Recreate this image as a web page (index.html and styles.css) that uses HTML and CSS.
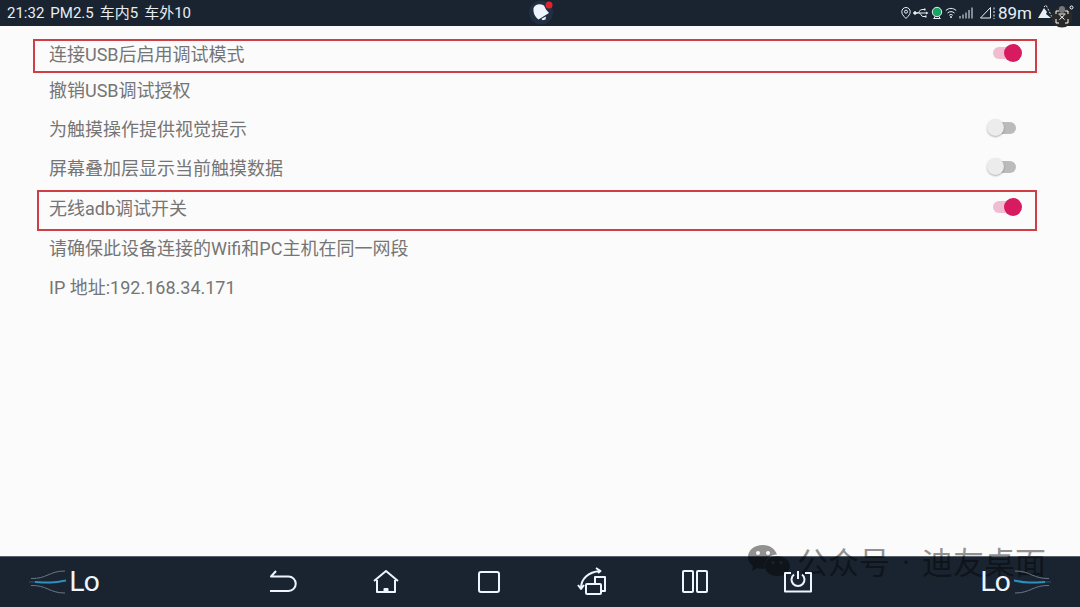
FILE: index.html
```html
<!DOCTYPE html>
<html lang="zh-CN">
<head>
    <meta charset="UTF-8">
    <meta name="viewport" content="width=device-width, initial-scale=1.0">
    <title>调试设置</title>
    <link rel="stylesheet" href="styles.css">
</head>
<body>
    <header class="status-bar">
        <div class="status-left">
            <span>21:32</span>
            <span>PM2.5</span>
            <span>车内5</span>
            <span>车外10</span>
        </div>
        <svg class="bell" viewBox="0 0 26 26" aria-hidden="true">
            <circle cx="14" cy="12.500" r="12" fill="#222e42"/>
            <path d="M6.500 8 C8 4 13 3 17 5.500 L19 9.500 L22 13 L11.500 19.500 C8 17 6 13 6.500 8 Z" fill="#eef5ff"/>
            <path d="M14.500 18.800 L19 16.500 L18.500 19.500 L15.500 20.200 Z" fill="#eef5ff"/>
            <circle cx="22" cy="5" r="3.500" fill="#e0242f"/>
        </svg>
        <div class="status-right">
            <svg class="pin" viewBox="0 0 10 14" aria-hidden="true">
                <path d="M5 12.500 C2 9.500 .8 8 .8 5.700 A4.200 4.200 0 0 1 9.200 5.700 C9.200 8 8 9.500 5 12.500 Z"/>
                <circle cx="5" cy="5.700" r="1.500"/>
            </svg>
            <svg class="usb" viewBox="0 0 16 14" aria-hidden="true">
                <path d="M2 7 H14 M4 7 C7 7 6 3.500 9 3.500 H11 M6 7 C8 7 8 10.500 10 10.500 H12"/>
                <circle cx="2" cy="7" r="1.300" fill="#e8eef5"/>
                <path d="M13 5.500 L15.500 7 L13 8.500 Z M11 2.500 H12.500 V4.500 H11 Z M12 9.500 H13.500 V11.500 H12 Z" fill="#e8eef5" stroke="none"/>
            </svg>
            <svg class="cam" viewBox="0 0 12 14" aria-hidden="true">
                <circle cx="6" cy="6" r="4.700" fill="#19a463"/>
                <path d="M2.500 12.500 H9.500 M4 10.500 L3 12.500 M8 10.500 L9 12.500"/>
            </svg>
            <svg class="wifi" viewBox="0 0 12 14" aria-hidden="true">
                <path d="M.8 4.500 C4 1.700 8 1.700 11.200 4.500 M2.500 7 C4.500 5.200 7.500 5.200 9.500 7 M4.200 9.300 C5.300 8.300 6.700 8.300 7.800 9.300"/>
                <circle cx="6" cy="11" r=".6" fill="#e8eef5"/>
            </svg>
            <svg class="signal" viewBox="0 0 14 14" aria-hidden="true">
                <path d="M1 12.500 V10 M4 12.500 V8.500 M7 12.500 V6.500 M10 12.500 V4 M13 12.500 V1.500"/>
            </svg>
            <svg class="mobile" viewBox="0 0 17 14" aria-hidden="true">
                <path d="M11.500 1.500 V12 H1.500 Z"/>
                <path d="M15 1.500 V13" stroke-dasharray="2 1.500"/>
            </svg>
            <span class="distance">89m</span>
            <svg class="scene" viewBox="0 0 46 26" aria-hidden="true">
                <path d="M4 18 L10 8 L13 12 L12 14 L17 18 Z" fill="#e8eef5" stroke="none"/>
                <path d="M10 7 L12 5 L18 17" stroke-dasharray="2 1.500"/>
            </svg>
        </div>
        <svg class="scan" viewBox="0 0 30 30" aria-hidden="true">
            <circle cx="13" cy="18" r="10.500" fill="#292929" stroke="none"/>
            <rect x="10" y="7" width="6" height="7" rx="3" fill="#777" stroke="none"/>
            <path d="M7 15 V12 H10 M16 12 H19 V15 M19 20 V24 H16 M10 24 H7 V20 M9.500 15 H16.500 M10.500 20.500 L15.500 16 M10.500 16 L15.500 20.500"/>
            <circle cx="22.500" cy="8.500" r="1.500"/>
        </svg>
    </header>

    <main class="settings">
        <div class="row marked first">
            <label for="usbDebug">连接USB后启用调试模式</label>
            <input class="switch" type="checkbox" id="usbDebug" checked>
        </div>
        <div class="row">
            <span>撤销USB调试授权</span>
        </div>
        <div class="row">
            <label for="showTouches">为触摸操作提供视觉提示</label>
            <input class="switch" type="checkbox" id="showTouches">
        </div>
        <div class="row">
            <label for="pointerData">屏幕叠加层显示当前触摸数据</label>
            <input class="switch" type="checkbox" id="pointerData">
        </div>
        <div class="row marked wireless">
            <label for="adbWireless">无线adb调试开关</label>
            <input class="switch" type="checkbox" id="adbWireless" checked>
        </div>
        <div class="row">
            <span>请确保此设备连接的Wifi和PC主机在同一网段</span>
        </div>
        <div class="row">
            <span>IP 地址:192.168.34.171</span>
        </div>
    </main>

    <footer class="nav-bar">
        <div class="watermark">
            <svg viewBox="0 0 42 36" aria-hidden="true">
                <path fill-rule="evenodd" d="M15 1 C6 1 0 6.500 0 13 C0 17 2 20 5 22 L4 27 L9.500 24 C12 25 15 25 17 24.600 C15 17 21 11 29 10.500 C27 5 22 1 15 1 Z M10 7 a2 2 0 1 1 0 4 a2 2 0 1 1 0 -4 Z M20 7 a2 2 0 1 1 0 4 a2 2 0 1 1 0 -4 Z"/>
                <path fill-rule="evenodd" d="M29 12 C22 12 17 16.500 17 22 C17 28 22 32 29 32 C31 32 33 31.600 34.500 31 L39 34 L38 29 C40.500 27 42 25 42 22 C42 16.500 36 12 29 12 Z M25 17 a1.600 1.600 0 1 1 0 3.200 a1.600 1.600 0 1 1 0 -3.200 Z M33 17 a1.600 1.600 0 1 1 0 3.200 a1.600 1.600 0 1 1 0 -3.200 Z"/>
            </svg>
            <span>公众号</span>
            <span class="dot">·</span>
            <span>迪友桌面</span>
        </div>
        <button class="temp" type="button" aria-label="左侧空调">
            <svg class="wind" viewBox="0 0 38 26" aria-hidden="true">
                <path d="M2 9.500 C18 10 20 2 36 2" stroke="#667789"/>
                <path d="M2 16.500 C18 16 20 24 36 24" stroke="#667789"/>
                <path d="M0 13 H12" stroke="#28506e"/>
                <path d="M6 13 C20 14 24 14 37 11.500" stroke="#2c8fbd" stroke-width="2"/>
            </svg>
            <span>Lo</span>
        </button>
        <nav class="keys">
            <button type="button" aria-label="返回">
                <svg viewBox="0 0 32 32" aria-hidden="true"><path d="M9 5 L4 10.500 H21.500 A7 7 0 0 1 21.500 25 H3"/></svg>
            </button>
            <button type="button" aria-label="主页">
                <svg viewBox="0 0 32 32" aria-hidden="true"><path d="M4 15 L16 5 L28 15 M7 14 V26 H25 V14"/><path d="M14.500 23 H17.500 V25 H14.500 Z"/></svg>
            </button>
            <button type="button" aria-label="最近任务">
                <svg viewBox="0 0 32 32" aria-hidden="true"><rect x="6" y="6" width="20" height="20" rx="2"/></svg>
            </button>
            <button type="button" aria-label="切换窗口">
                <svg viewBox="0 0 32 32" aria-hidden="true"><rect x="10" y="18" width="15" height="10" rx="1"/><path d="M19 17 V11 H29 V25 H26"/><path d="M5 22 C5 13 12 6 24 5 M20 2 L24.500 5 L22 7 M2 19 L5 23 L8 19"/></svg>
            </button>
            <button type="button" aria-label="分屏">
                <svg viewBox="0 0 32 32" aria-hidden="true"><rect x="4" y="5" width="10" height="21" rx="1"/><rect x="18" y="5" width="10" height="21" rx="1"/></svg>
            </button>
            <button type="button" aria-label="息屏">
                <svg viewBox="0 0 32 32" aria-hidden="true"><path d="M9 7 H3 V25.500 H29 V7 H23"/><path d="M16 5 V13 M12 8.500 A6.500 6.500 0 1 0 20 8.500"/></svg>
            </button>
        </nav>
        <button class="temp right" type="button" aria-label="右侧空调">
            <svg class="wind" viewBox="0 0 38 26" aria-hidden="true">
                <path d="M2 9.500 C18 10 20 2 36 2" stroke="#667789"/>
                <path d="M2 16.500 C18 16 20 24 36 24" stroke="#667789"/>
                <path d="M0 13 H12" stroke="#28506e"/>
                <path d="M6 13 C20 14 24 14 37 11.500" stroke="#2c8fbd" stroke-width="2"/>
            </svg>
            <span>Lo</span>
        </button>
    </footer>
</body>
</html>
```
FILE: styles.css
```css
* {
    box-sizing: border-box;
}
body {
    font-family: Roboto, "Noto Sans CJK SC", sans-serif;
    margin: 0;
    min-height: 100vh;
    display: flex;
    flex-direction: column;
    background-color: #fbfbfb;
    color: #757575;
}
button {
    padding: 0;
    border: none;
    background: none;
    color: inherit;
    cursor: pointer;
}

/* status bar */
.status-bar {
    position: relative;
    display: grid;
    grid-template-columns: 1fr 26px 1fr;
    align-items: center;
    height: 26px;
    background-color: #1a2430;
    color: #e8eef5;
    font-size: 15px;
    line-height: 26px;
}
.status-left {
    display: flex;
    gap: 6px;
    padding-left: 7px;
}
.bell {
    width: 26px;
    height: 26px;
}
.status-right {
    display: flex;
    justify-content: flex-end;
    align-items: center;
    gap: 2px;
}
.status-right svg {
    height: 14px;
    fill: none;
    stroke: #e8eef5;
    stroke-width: 1;
}
.status-right .pin {
    width: 10px;
}
.status-right .usb {
    width: 16px;
}
.status-right .cam,
.status-right .wifi {
    width: 12px;
}
.status-right .signal {
    width: 14px;
}
.status-right .mobile {
    width: 17px;
    margin-left: 4px;
}
.status-right .scene {
    width: 46px;
    height: 26px;
}
.distance {
    font-size: 17px;
}
.scan {
    position: absolute;
    top: -1px;
    right: 1px;
    width: 30px;
    height: 30px;
    fill: none;
    stroke: #fff;
}

/* settings list */
.settings {
    flex: 1;
    padding: 11px 58px 0 49px;
    font-size: 18px;
}
.row {
    position: relative;
    display: flex;
    justify-content: space-between;
    align-items: center;
    height: 39px;
}
.row.first {
    height: 32px;
}
.row.wireless {
    height: 41px;
}
.row.marked::after {
    content: "";
    position: absolute;
    top: 2px;
    right: -15px;
    bottom: -4px;
    left: -16px;
    border: 2px solid #cf3d45;
    pointer-events: none;
}
.row.wireless::after {
    top: 4px;
    left: -12px;
}
.switch {
    appearance: none;
    position: relative;
    width: 30px;
    height: 20px;
    margin: 0 6px 0 0;
    cursor: pointer;
}
.switch:checked {
    margin: 0;
}
.switch::before {
    content: "";
    position: absolute;
    top: 4px;
    left: 4px;
    width: 26px;
    height: 12px;
    border-radius: 6px;
    background-color: #bbb;
}
.switch::after {
    content: "";
    position: absolute;
    top: 1px;
    left: 1px;
    width: 17px;
    height: 17px;
    border-radius: 50%;
    background-color: #ececec;
    box-shadow: 0 1px 2px rgba(0, 0, 0, 0.3);
}
.switch:checked::before {
    left: 1px;
    background-color: #f0bcd0;
}
.switch:checked::after {
    left: 12px;
    width: 18px;
    height: 18px;
    background-color: #d81b60;
    box-shadow: none;
}

/* bottom bar */
.nav-bar {
    position: relative;
    display: flex;
    justify-content: space-between;
    align-items: center;
    height: 51px;
    padding: 0 29px;
    border-top: 1px solid #59626b;
    background-color: #1a2430;
    color: #eef5ff;
}
.keys {
    position: relative;
    display: flex;
}
.keys button {
    width: 103px;
    height: 50px;
}
.keys svg {
    display: block;
    width: 32px;
    height: 32px;
    margin: 0 auto;
    fill: none;
    stroke: #eef5ff;
    stroke-width: 2;
    stroke-linejoin: round;
}
.temp {
    position: relative;
    display: flex;
    align-items: center;
    gap: 2px;
    font-family: "DejaVu Sans", sans-serif;
    font-size: 27px;
    line-height: 28px;
}
.temp.right {
    flex-direction: row-reverse;
}
.wind {
    width: 38px;
    height: 26px;
    fill: none;
}
.right .wind {
    transform: scaleX(-1);
}
.watermark {
    position: absolute;
    top: -15px;
    right: 34px;
    display: flex;
    align-items: center;
    gap: 7px;
    color: #000;
    font-size: 31px;
    line-height: 44px;
    opacity: 0.42;
}
.watermark .dot {
    width: 18px;
    text-align: center;
}
.watermark svg {
    width: 42px;
    height: 36px;
    margin-top: -4px;
}
```
